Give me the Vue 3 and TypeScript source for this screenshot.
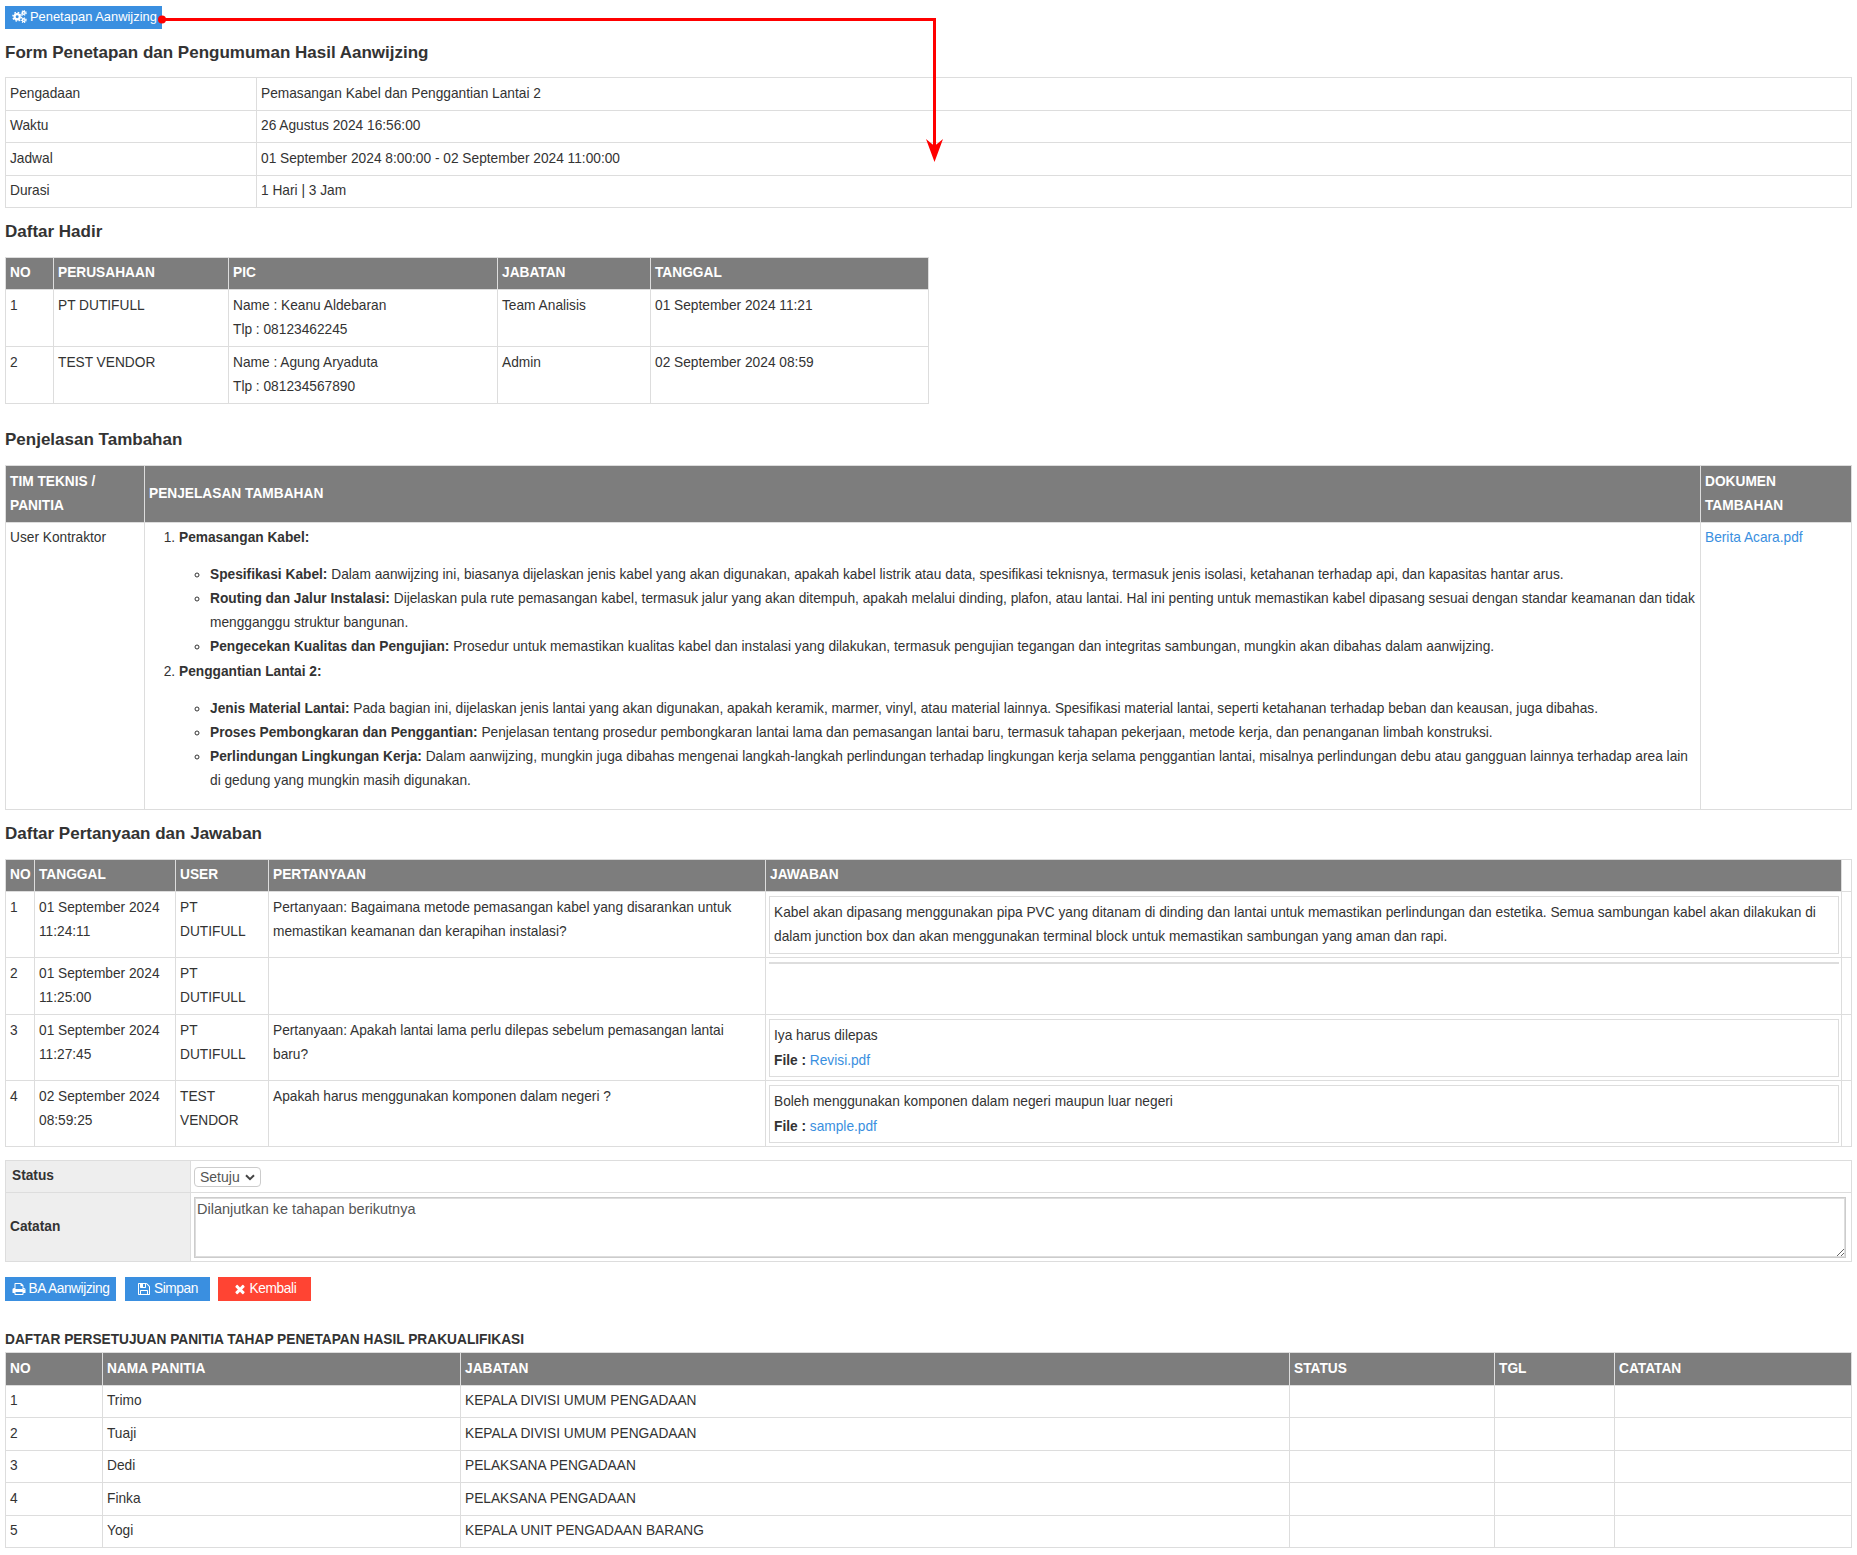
<script setup lang="ts">
const info = [
  ['Pengadaan', 'Pemasangan Kabel dan Penggantian Lantai 2'],
  ['Waktu', '26 Agustus 2024 16:56:00'],
  ['Jadwal', '01 September 2024 8:00:00 - 02 September 2024 11:00:00'],
  ['Durasi', '1 Hari | 3 Jam'],
]
const hadir = [
  { no: 1, co: 'PT DUTIFULL', name: 'Name : Keanu Aldebaran', tlp: 'Tlp : 08123462245', job: 'Team Analisis', date: '01 September 2024 11:21' },
  { no: 2, co: 'TEST VENDOR', name: 'Name : Agung Aryaduta', tlp: 'Tlp : 081234567890', job: 'Admin', date: '02 September 2024 08:59' },
]
const qa = [
  { no: 1, d: '01 September 2024', t: '11:24:11', u: 'PT DUTIFULL', q: 'Pertanyaan: Bagaimana metode pemasangan kabel yang disarankan untuk memastikan keamanan dan kerapihan instalasi?', a: 'Kabel akan dipasang menggunakan pipa PVC yang ditanam di dinding dan lantai untuk memastikan perlindungan dan estetika. Semua sambungan kabel akan dilakukan di dalam junction box dan akan menggunakan terminal block untuk memastikan sambungan yang aman dan rapi.', f: '' },
  { no: 2, d: '01 September 2024', t: '11:25:00', u: 'PT DUTIFULL', q: '', a: '', f: '' },
  { no: 3, d: '01 September 2024', t: '11:27:45', u: 'PT DUTIFULL', q: 'Pertanyaan: Apakah lantai lama perlu dilepas sebelum pemasangan lantai baru?', a: 'Iya harus dilepas', f: 'Revisi.pdf' },
  { no: 4, d: '02 September 2024', t: '08:59:25', u: 'TEST VENDOR', q: 'Apakah harus menggunakan komponen dalam negeri ?', a: 'Boleh menggunakan komponen dalam negeri maupun luar negeri', f: 'sample.pdf' },
]
const panitia = [
  ['Trimo', 'KEPALA DIVISI UMUM PENGADAAN'],
  ['Tuaji', 'KEPALA DIVISI UMUM PENGADAAN'],
  ['Dedi', 'PELAKSANA PENGADAAN'],
  ['Finka', 'PELAKSANA PENGADAAN'],
  ['Yogi', 'KEPALA UNIT PENGADAAN BARANG'],
]
const list = [
  {
    title: 'Pemasangan Kabel:',
    items: [
      ['Spesifikasi Kabel:', 'Dalam aanwijzing ini, biasanya dijelaskan jenis kabel yang akan digunakan, apakah kabel listrik atau data, spesifikasi teknisnya, termasuk jenis isolasi, ketahanan terhadap api, dan kapasitas hantar arus.'],
      ['Routing dan Jalur Instalasi:', 'Dijelaskan pula rute pemasangan kabel, termasuk jalur yang akan ditempuh, apakah melalui dinding, plafon, atau lantai. Hal ini penting untuk memastikan kabel dipasang sesuai dengan standar keamanan dan tidak mengganggu struktur bangunan.'],
      ['Pengecekan Kualitas dan Pengujian:', 'Prosedur untuk memastikan kualitas kabel dan instalasi yang dilakukan, termasuk pengujian tegangan dan integritas sambungan, mungkin akan dibahas dalam aanwijzing.'],
    ],
  },
  {
    title: 'Penggantian Lantai 2:',
    items: [
      ['Jenis Material Lantai:', 'Pada bagian ini, dijelaskan jenis lantai yang akan digunakan, apakah keramik, marmer, vinyl, atau material lainnya. Spesifikasi material lantai, seperti ketahanan terhadap beban dan keausan, juga dibahas.'],
      ['Proses Pembongkaran dan Penggantian:', 'Penjelasan tentang prosedur pembongkaran lantai lama dan pemasangan lantai baru, termasuk tahapan pekerjaan, metode kerja, dan penanganan limbah konstruksi.'],
      ['Perlindungan Lingkungan Kerja:', 'Dalam aanwijzing, mungkin juga dibahas mengenai langkah-langkah perlindungan terhadap lingkungan kerja selama penggantian lantai, misalnya perlindungan debu atau gangguan lainnya terhadap area lain di gedung yang mungkin masih digunakan.'],
    ],
  },
]
</script>

<template>
  <div class="page">
    <svg class="flow" width="960" height="170" viewBox="0 0 960 170">
      <circle cx="162" cy="19.5" r="4" fill="#ff0000" />
      <path d="M162 19.5H934.5V150" fill="none" stroke="#ff0000" stroke-width="3" />
      <path d="M926 139L934.5 146L943 139L934.5 162Z" fill="#ff0000" />
    </svg>

    <a class="btn top-btn">
      <svg class="ic cogs" viewBox="0 0 16 14">
        <circle cx="5.5" cy="7.2" r="2.8" fill="none" stroke="#fff" stroke-width="2.4" />
        <circle cx="5.5" cy="7.2" r="4.6" fill="none" stroke="#fff" stroke-width="1.6" stroke-dasharray="1.8 1.8" />
        <circle cx="12.6" cy="3.2" r="1.5" fill="none" stroke="#fff" stroke-width="1.6" />
        <circle cx="12.6" cy="3.2" r="2.6" fill="none" stroke="#fff" stroke-width="1.1" stroke-dasharray="1.2 1.2" />
        <circle cx="12.6" cy="11" r="1.5" fill="none" stroke="#fff" stroke-width="1.6" />
        <circle cx="12.6" cy="11" r="2.6" fill="none" stroke="#fff" stroke-width="1.1" stroke-dasharray="1.2 1.2" />
      </svg>
      Penetapan Aanwijzing
    </a>

    <h3 class="h-form">Form Penetapan dan Pengumuman Hasil Aanwijzing</h3>

    <table class="tb t-info tight">
      <colgroup><col class="c-info" /><col /></colgroup>
      <tbody>
        <tr v-for="r in info" :key="r[0]"><td>{{ r[0] }}</td><td>{{ r[1] }}</td></tr>
      </tbody>
    </table>

    <h3 class="h-hadir">Daftar Hadir</h3>
    <table class="tb t-hadir">
      <colgroup><col class="h1" /><col class="h2" /><col class="h3" /><col class="h4" /><col /></colgroup>
      <thead class="head32">
        <tr><th>NO</th><th>PERUSAHAAN</th><th>PIC</th><th>JABATAN</th><th>TANGGAL</th></tr>
      </thead>
      <tbody>
        <tr v-for="r in hadir" :key="r.no">
          <td>{{ r.no }}</td>
          <td>{{ r.co }}</td>
          <td>{{ r.name }}<br />{{ r.tlp }}</td>
          <td>{{ r.job }}</td>
          <td>{{ r.date }}</td>
        </tr>
      </tbody>
    </table>

    <h3 class="h-penj">Penjelasan Tambahan</h3>
    <table class="tb t-penj">
      <colgroup><col class="p1" /><col /><col class="p3" /></colgroup>
      <thead>
        <tr><th>TIM TEKNIS / PANITIA</th><th>PENJELASAN TAMBAHAN</th><th>DOKUMEN TAMBAHAN</th></tr>
      </thead>
      <tbody>
        <tr>
          <td>User Kontraktor</td>
          <td>
            <ol class="ol">
              <li v-for="g in list" :key="g.title">
                <strong>{{ g.title }}</strong>
                <ul class="ul">
                  <li v-for="it in g.items" :key="it[0]"><strong>{{ it[0] }}</strong> {{ it[1] }}</li>
                </ul>
              </li>
            </ol>
          </td>
          <td><a class="link">Berita Acara.pdf</a></td>
        </tr>
      </tbody>
    </table>

    <h3 class="h-qa">Daftar Pertanyaan dan Jawaban</h3>
    <table class="tb t-qa">
      <colgroup><col class="q1" /><col class="q2" /><col class="q3" /><col class="q4" /><col /><col class="q6" /></colgroup>
      <thead class="head32">
        <tr><th>NO</th><th>TANGGAL</th><th>USER</th><th>PERTANYAAN</th><th>JAWABAN</th><th class="blank"></th></tr>
      </thead>
      <tbody>
        <tr v-for="r in qa" :key="r.no">
          <td>{{ r.no }}</td>
          <td>{{ r.d }}<br />{{ r.t }}</td>
          <td>{{ r.u }}</td>
          <td>{{ r.q }}</td>
          <td class="ans-cell">
            <div class="ans" :class="{ empty: !r.a, 'has-file': !!r.f }">
              <template v-if="r.a">{{ r.a }}</template>
              <span v-if="r.f" class="file-line"><strong>File :</strong> <a class="link">{{ r.f }}</a></span>
            </div>
          </td>
          <td></td>
        </tr>
      </tbody>
    </table>

    <table class="tb t-form">
      <colgroup><col class="f1" /><col /></colgroup>
      <tbody>
        <tr>
          <th class="lab lab-s">Status</th>
          <td class="fld fld-s">
            <span class="sel-wrap">
              <select class="sel"><option>Setuju</option></select>
              <svg class="chev" viewBox="0 0 10 7"><path d="M1 1.2L5 5.2L9 1.2" fill="none" stroke="#444" stroke-width="2" /></svg>
            </span>
          </td>
        </tr>
        <tr>
          <th class="lab">Catatan</th>
          <td class="fld"><textarea class="ta">Dilanjutkan ke tahapan berikutnya</textarea></td>
        </tr>
      </tbody>
    </table>

    <div class="actions">
      <a class="btn act b1">
        <svg class="ic" viewBox="0 0 1792 1792"><path fill="#fff" d="M448 1536h896v-256h-896v256zm0-640h896v-384h-160q-40 0-68-28t-28-68v-160h-640v640zm1152 64q0-26-19-45t-45-19-45 19-19 45 19 45 45 19 45-19 19-45zm128 0v416q0 13-9.5 22.5t-22.5 9.5h-224v160q0 40-28 68t-68 28h-960q-40 0-68-28t-28-68v-160h-224q-13 0-22.5-9.5t-9.5-22.5v-416q0-79 56.5-135.5t135.5-56.5h64v-544q0-40 28-68t68-28h672q40 0 88 20t76 48l152 152q28 28 48 76t20 88v256h64q79 0 135.5 56.5t56.5 135.5z" /></svg>
        BA Aanwijzing
      </a>
      <a class="btn act b2">
        <svg class="ic" viewBox="0 0 1792 1792"><path fill="#fff" d="M512 1536h768v-384h-768v384zm896 0h128v-896q0-14-10-38.5t-20-34.5l-281-281q-10-10-34-20t-39-10v416q0 40-28 68t-68 28h-576q-40 0-68-28t-28-68v-416h-128v1280h128v-416q0-40 28-68t68-28h832q40 0 68 28t28 68v416zm-384-928v-320q0-13-9.5-22.5t-22.5-9.5h-192q-13 0-22.5 9.5t-9.5 22.5v320q0 13 9.5 22.5t22.5 9.5h192q13 0 22.5-9.5t9.5-22.5zm640 32v928q0 40-28 68t-68 28h-1344q-40 0-68-28t-28-68v-1344q0-40 28-68t68-28h928q40 0 88 20t76 48l280 280q28 28 48 76t20 88z" /></svg>
        Simpan
      </a>
      <a class="btn act b3">
        <svg class="ic" viewBox="0 0 1792 1792"><path fill="#fff" d="M1490 1322q0 40-28 68l-136 136q-28 28-68 28t-68-28l-294-294-294 294q-28 28-68 28t-68-28l-136-136q-28-28-28-68t28-68l294-294-294-294q-28-28-28-68t28-68l136-136q28-28 68-28t68 28l294 294 294-294q28-28 68-28t68 28l136 136q28 28 28 68t-28 68l-294 294 294 294q28 28 28 68z" /></svg>
        Kembali
      </a>
    </div>

    <h4 class="h-list">DAFTAR PERSETUJUAN PANITIA TAHAP PENETAPAN HASIL PRAKUALIFIKASI</h4>
    <table class="tb t-pan tight">
      <colgroup><col class="n1" /><col class="n2" /><col class="n3" /><col class="n4" /><col class="n5" /><col /></colgroup>
      <thead>
        <tr><th>NO</th><th>NAMA PANITIA</th><th>JABATAN</th><th>STATUS</th><th>TGL</th><th>CATATAN</th></tr>
      </thead>
      <tbody>
        <tr v-for="(r, i) in panitia" :key="r[0]">
          <td>{{ i + 1 }}</td><td>{{ r[0] }}</td><td>{{ r[1] }}</td><td></td><td></td><td></td>
        </tr>
      </tbody>
    </table>
  </div>
</template>

<style scoped>
.page {
  position: relative;
  box-sizing: border-box;
  width: 1857px;
  height: 1555px;
  padding: 6px 5px 0;
  font-family: "Liberation Sans", Arial, sans-serif;
  font-size: 13.73px;
  line-height: 24px;
  color: #333;
  background: #fff;
  overflow: hidden;
}
.flow {
  position: absolute;
  left: 0;
  top: 0;
  pointer-events: none;
  z-index: 2;
}
.btn {
  display: inline-flex;
  align-items: center;
  box-sizing: border-box;
  color: #fff;
  background: #3a8fe0;
  white-space: nowrap;
}
.top-btn {
  width: 157px;
  height: 23px;
  padding: 0 0 2px 7px;
  font-size: 12.9px;
  gap: 3px;
  vertical-align: top;
}
.ic {
  width: 14px;
  height: 14px;
  flex: none;
}
.cogs {
  width: 15px;
  height: 13px;
}
h3 {
  margin: 0;
  font-size: 17px;
  line-height: 24px;
  font-weight: 700;
  color: #333;
}
.h-form { margin: 11px 0 12px; }
.h-hadir { margin-top: 12px; }
.h-penj { margin-top: 24px; }
.h-qa { margin-top: 12px; }
.tb {
  table-layout: fixed;
  border-collapse: collapse;
  width: 1847px;
}
.tb td,
.tb th {
  border: 1px solid #ddd;
  padding: 4px;
  text-align: left;
  vertical-align: top;
  font-weight: 400;
}
.tb th {
  background: #7d7d7d;
  color: #fff;
  font-weight: 700;
  font-size: 13.73px;
  vertical-align: middle;
}
.tight td,
.tight th {
  line-height: 23.5px;
}
.t-info tr:nth-child(even) td,
.t-pan tbody tr:nth-child(odd) td {
  padding-top: 3px;
  padding-bottom: 5px;
}
.head32 th {
  line-height: 23px;
  padding-top: 3px;
  padding-bottom: 5px;
}
.c-info { width: 251px; }
.t-hadir { width: 924px; margin-top: 13px; }
.h1 { width: 48px; }
.h2 { width: 175px; }
.h3 { width: 269px; }
.h4 { width: 153px; }
.t-penj { margin-top: 13px; }
.t-penj tbody td { padding: 3px 4px 5px; }
.p1 { width: 139px; }
.p3 { width: 151px; }
.ol {
  margin: 0 0 11px;
  padding-left: 30px;
}
.ul {
  margin: 13px 0 1px;
  padding-left: 31px;
  list-style: circle;
}
.link { color: #3a8fe0; }
.t-qa { margin-top: 13px; }
.q1 { width: 29px; }
.q2 { width: 141px; }
.q3 { width: 93px; }
.q4 { width: 497px; }
.q6 { width: 10px; }
.tb th.blank { background: #fff; }
.tb td.ans-cell { padding: 4px 2px 3px 3px; }
.ans {
  border: 1px solid #ddd;
  padding: 4px;
}
.ans.has-file {
  padding: 4px 4px 3px;
}
.file-line {
  display: block;
  margin-top: 1px;
}
.ans.empty {
  padding: 0;
  height: 0;
}
.t-form { margin-top: 13px; }
.f1 { width: 185px; }
.tb th.lab {
  background: #eee;
  color: #333;
  line-height: 23px;
  padding: 3px 4px 5px;
}
.tb th.lab-s { padding-left: 6px; }
.tb td.fld { padding: 4px 5px 3px 3px; }
.tb td.fld-s { padding: 6px 5px 5px 3px; }
.sel-wrap {
  position: relative;
  display: block;
  width: 67px;
  height: 20px;
}
.sel {
  display: block;
  appearance: none;
  box-sizing: border-box;
  width: 67px;
  height: 20px;
  padding: 0 0 0 5px;
  font: 14px "Liberation Sans", Arial, sans-serif;
  color: #555;
  background: #fff;
  border: 1px solid #ccc;
  border-radius: 4px;
}
.chev {
  position: absolute;
  left: 51px;
  top: 7px;
  width: 10px;
  height: 7px;
  pointer-events: none;
}
.ta {
  display: block;
  box-sizing: border-box;
  width: 100%;
  height: 61px;
  padding: 2px;
  font: 14.5px/18px "Liberation Sans", Arial, sans-serif;
  color: #555;
  border: 1px solid #ccc;
  outline: 1px solid #ddd;
  outline-offset: -2px;
}
.actions {
  display: flex;
  margin-top: 15px;
}
.act {
  height: 24px;
  justify-content: center;
  gap: 3px;
  font-size: 13.73px;
  letter-spacing: -0.4px;
}
.b1 { width: 111px; margin-right: 9px; }
.b2 { width: 85px; margin-right: 8px; }
.b3 { width: 93px; background: #ff4433; }
.h-list {
  margin: 29px 0 0;
  font-size: 13.73px;
  line-height: 20px;
  font-weight: 700;
  color: #333;
}
.t-pan { margin-top: 2px; }
.n1 { width: 97px; }
.n2 { width: 358px; }
.n3 { width: 829px; }
.n4 { width: 205px; }
.n5 { width: 120px; }
</style>
